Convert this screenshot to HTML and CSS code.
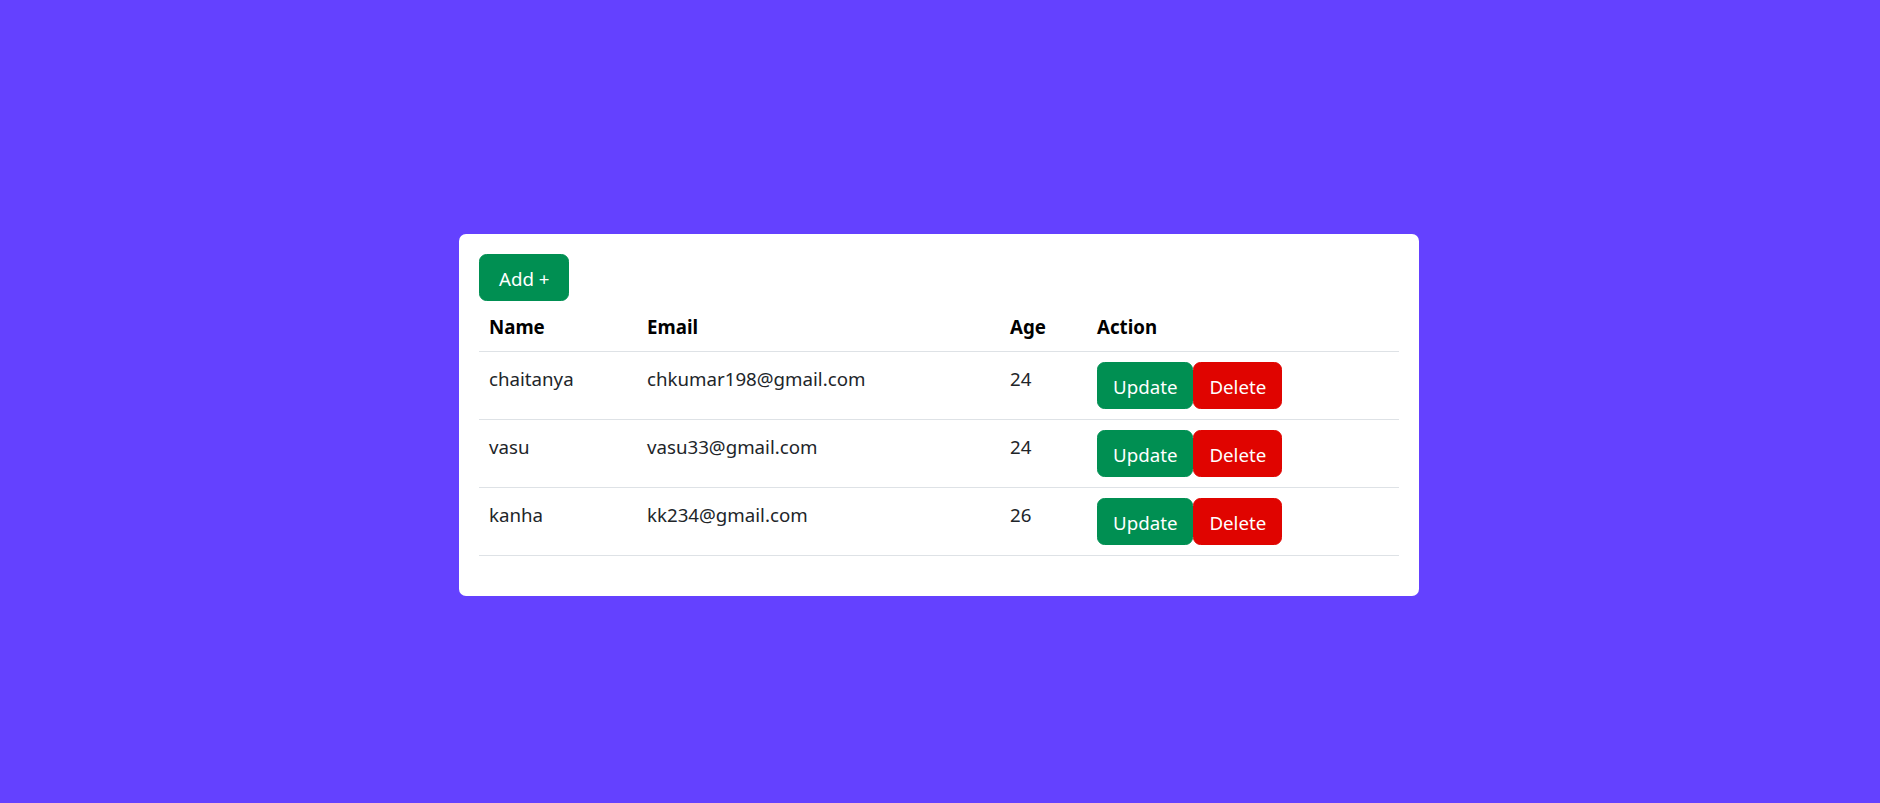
FILE: index.html
```html
<!DOCTYPE html>
<html lang="en">
<head>
<meta charset="utf-8">
<title>Users</title>
<link rel="stylesheet" href="styles.css">
</head>
<body>
<main class="page">
  <section class="card">
    <div class="toolbar">
      <button class="btn btn-success btn-add">Add +</button>
    </div>
    <table class="table">
      <thead>
        <tr>
          <th class="col-name">Name</th>
          <th class="col-email">Email</th>
          <th class="col-age">Age</th>
          <th class="col-action">Action</th>
        </tr>
      </thead>
      <tbody>
        <tr>
          <td>chaitanya</td>
          <td>chkumar198@gmail.com</td>
          <td>24</td>
          <td><div class="actions"><button class="btn btn-success">Update</button><button class="btn btn-danger">Delete</button></div></td>
        </tr>
        <tr>
          <td>vasu</td>
          <td>vasu33@gmail.com</td>
          <td>24</td>
          <td><div class="actions"><button class="btn btn-success">Update</button><button class="btn btn-danger">Delete</button></div></td>
        </tr>
        <tr>
          <td>kanha</td>
          <td>kk234@gmail.com</td>
          <td>26</td>
          <td><div class="actions"><button class="btn btn-success">Update</button><button class="btn btn-danger">Delete</button></div></td>
        </tr>
      </tbody>
    </table>
  </section>
</main>
</body>
</html>
```

FILE: styles.css
```css
* { box-sizing: border-box; }
html, body {
  margin: 0;
  padding: 0;
}
body {
  background: #6441ff;
  font-family: "Noto Sans", "Open Sans", sans-serif;
  font-size: 18.7px;
  line-height: 30px;
  color: #212529;
  height: 803px;
  overflow: hidden;
}
.page {
  display: flex;
  justify-content: center;
  padding-top: 234px;
  padding-right: 2px;
}
.card {
  width: 960px;
  background: #fff;
  border-radius: 7px;
  padding: 20px;
}
.toolbar {
  display: flex;
}
.btn {
  font-family: inherit;
  font-size: 18.7px;
  line-height: 30px;
  padding: 8.5px 15px 6.5px;
  border: 1px solid transparent;
  border-radius: 7.5px;
  color: #fff;
  cursor: pointer;
  height: 47px;
  display: inline-flex;
  align-items: center;
}
.btn-add {
  padding-left: 19px;
  padding-right: 19px;
}
.btn-success { background: #008f52; border-color: #008f52; }
.btn-danger { background: #e00400; border-color: #e00400; }
.table {
  width: 100%;
  border-collapse: collapse;
  margin-bottom: 20px;
}
.table th, .table td {
  text-align: left;
  vertical-align: top;
  padding: 10px;
  border-bottom: 1px solid #dee2e6;
}
.table td {
  line-height: 34px;
}
.table th {
  font-weight: 700;
  color: #000;
  padding-top: 11px;
  padding-bottom: 9px;
}
.col-name { width: 158px; }
.col-email { width: 363px; }
.col-age { width: 87px; }
.col-action { width: 312px; }
.actions {
  display: flex;
}
```
